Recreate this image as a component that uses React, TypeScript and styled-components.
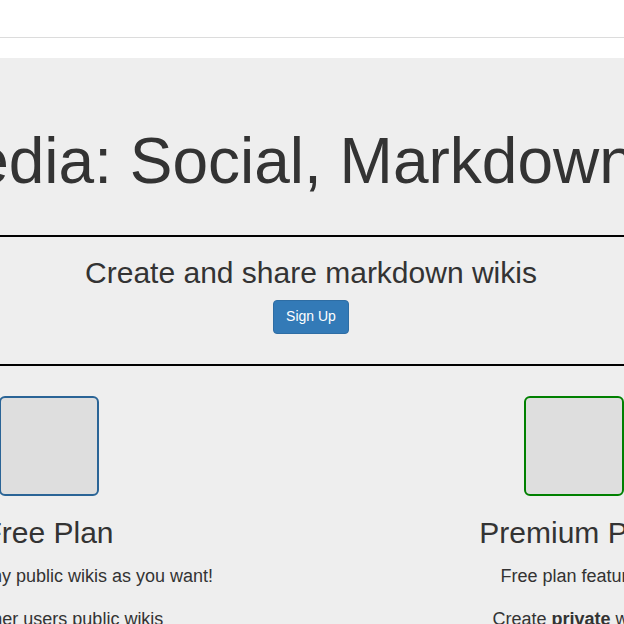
import React from "react";
import styled, { createGlobalStyle } from "styled-components";

const Global = createGlobalStyle`
  html, body {
    margin: 0;
    padding: 0;
    background: #fff;
    overflow: hidden;
  }
  body {
    font-family: "Liberation Sans", Arial, Helvetica, sans-serif;
    font-size: 14px;
    line-height: 1.42857;
    color: #333;
  }
  * { box-sizing: border-box; }
`;

const Navbar = styled.nav`
  height: 38px;
  background: #fff;
  border-bottom: 1px solid #dcdcdc;
  margin-bottom: 20px;
`;

const Jumbotron = styled.main`
  background: #eee;
  padding: 48px 2px 0 0;
  min-height: 566px;
  display: flex;
  justify-content: center;
  overflow: hidden;
`;

const Container = styled.div`
  flex: 0 0 1050px;
  width: 1050px;
  text-align: center;
`;

const Title = styled.h1`
  margin: 20px 0 0;
  font-size: 64px;
  font-weight: 400;
  line-height: 1.1;
  white-space: nowrap;
`;

const Rule = styled.hr<{ $top: number }>`
  margin: ${(p) => p.$top}px -600px 0;
  border: 0;
  border-top: 2px solid #000;
  height: 0;
`;

const Subtitle = styled.h2`
  margin: 19px 0 0;
  font-size: 30px;
  font-weight: 400;
  line-height: 1.1;
`;

const Button = styled.button`
  margin-top: 11px;
  display: inline-block;
  font-family: inherit;
  font-size: 14px;
  line-height: 1.42857;
  padding: 6px 12px;
  color: #fff;
  background: #337ab7;
  border: 1px solid #2e6da4;
  border-radius: 4px;
`;

const Plans = styled.section`
  display: grid;
  grid-template-columns: 1fr 1fr;
  margin-top: 30px;
`;

const Plan = styled.div`
  display: flex;
  flex-direction: column;
  align-items: center;
`;

const Thumb = styled.div<{ $color: string }>`
  width: 100px;
  height: 100px;
  background: #dedede;
  border: 2px solid ${(p) => p.$color};
  border-radius: 6px;
`;

const PlanTitle = styled.h2`
  margin: 20px 0 0;
  font-size: 30px;
  font-weight: 400;
  line-height: 1.1;
`;

const Feature = styled.p<{ $first?: boolean }>`
  margin: ${(p) => (p.$first ? 15 : 17)}px 0 0;
  font-size: 18px;
  line-height: 25.7px;
  white-space: nowrap;
`;

export default function App() {
  return (
    <>
      <Global />
      <Navbar />
      <Jumbotron>
        <Container>
          <Title>Blocipedia: Social, Markdown Wikis!</Title>
          <Rule $top={39} />
          <Subtitle>Create and share markdown wikis</Subtitle>
          <Button>Sign Up</Button>
          <Rule $top={30} />
          <Plans>
            <Plan>
              <Thumb $color="#2a6496" />
              <PlanTitle>Free Plan</PlanTitle>
              <Feature $first>Create as many public wikis as you want!</Feature>
              <Feature>View other users public wikis</Feature>
            </Plan>
            <Plan>
              <Thumb $color="#008000" />
              <PlanTitle>Premium Plan</PlanTitle>
              <Feature $first>Free plan features</Feature>
              <Feature>
                Create <strong>private</strong> wikis
              </Feature>
            </Plan>
          </Plans>
        </Container>
      </Jumbotron>
    </>
  );
}
